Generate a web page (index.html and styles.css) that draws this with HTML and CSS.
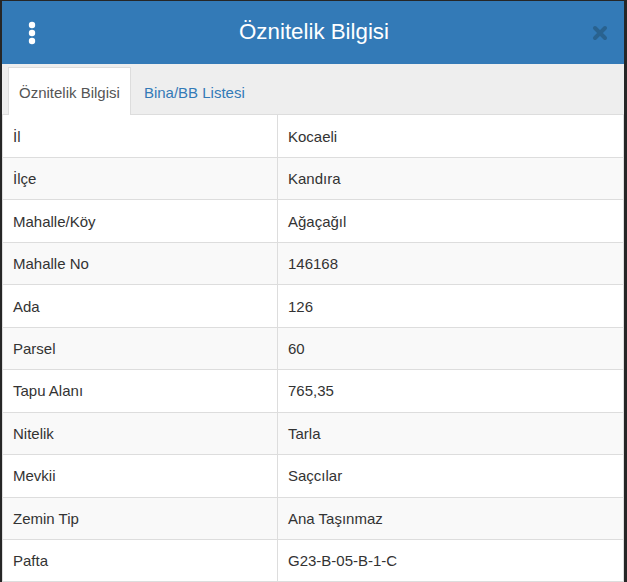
FILE: index.html
```html
<!DOCTYPE html>
<html lang="tr">
<head>
<meta charset="utf-8">
<title>Öznitelik Bilgisi</title>
<link rel="stylesheet" href="styles.css">
</head>
<body>
<div class="modal">
  <div class="header">
    <span class="menu">
      <svg width="8" height="24" viewBox="0 0 8 24"><circle cx="4" cy="4" r="3.2" fill="#fff"/><circle cx="4" cy="12" r="3.2" fill="#fff"/><circle cx="4" cy="20" r="3.2" fill="#fff"/></svg>
    </span>
    <h1 class="title">Öznitelik Bilgisi</h1>
    <span class="close">
      <svg width="16" height="16" viewBox="0 0 16 16"><path d="M3 3 L13 13 M13 3 L3 13" stroke="#29628f" stroke-width="4" stroke-linecap="round"/></svg>
    </span>
  </div>
  <div class="tabs">
    <span class="tab active">Öznitelik Bilgisi</span>
    <span class="tab">Bina/BB Listesi</span>
  </div>
  <div class="table">
    <div class="row"><div class="cell">İl</div><div class="cell">Kocaeli</div></div>
    <div class="row"><div class="cell">İlçe</div><div class="cell">Kandıra</div></div>
    <div class="row"><div class="cell">Mahalle/Köy</div><div class="cell">Ağaçağıl</div></div>
    <div class="row"><div class="cell">Mahalle No</div><div class="cell">146168</div></div>
    <div class="row"><div class="cell">Ada</div><div class="cell">126</div></div>
    <div class="row"><div class="cell">Parsel</div><div class="cell">60</div></div>
    <div class="row"><div class="cell">Tapu Alanı</div><div class="cell">765,35</div></div>
    <div class="row"><div class="cell">Nitelik</div><div class="cell">Tarla</div></div>
    <div class="row"><div class="cell">Mevkii</div><div class="cell">Saçcılar</div></div>
    <div class="row"><div class="cell">Zemin Tip</div><div class="cell">Ana Taşınmaz</div></div>
    <div class="row"><div class="cell">Pafta</div><div class="cell">G23-B-05-B-1-C</div></div>
  </div>
</div>
</body>
</html>
```
FILE: styles.css
```css
html, body {
  margin: 0;
  padding: 0;
  height: 100%;
  overflow: hidden;
}
body {
  background: #262626;
  font-family: "Liberation Sans", Arial, sans-serif;
  font-size: 15px;
  color: #333;
}
.modal {
  margin: 1px 3px 0 2px;
  width: 622px;
  background: #fff;
}
.header {
  height: 63px;
  background: #337ab7;
  display: flex;
  align-items: center;
  justify-content: space-between;
  padding: 0 16px 0 26px;
}
.menu {
  display: flex;
  width: 8px;
  margin-top: 1px;
}
.title {
  margin: 0;
  font-size: 22.3px;
  font-weight: normal;
  color: #fff;
  line-height: 1;
  margin-left: 0;
}
.close {
  display: flex;
  margin-top: 1px;
}
.tabs {
  background: #eee;
  display: flex;
  align-items: flex-end;
  gap: 2px;
  padding: 3px 6px 0;
  height: 47px;
  border-bottom: 1px solid #ddd;
}
.tab {
  padding: 14px 10px 12px;
  line-height: 21px;
  color: #337ab7;
  border: 1px solid transparent;
  border-bottom: 0;
  margin-bottom: -1px;
}
.tab.active {
  background: #fff;
  color: #555;
  border-color: #ddd;
}
.table {
  border-left: 1px solid #ddd;
  border-right: 1px solid #ddd;
}
.row {
  display: grid;
  grid-template-columns: 274px 1fr;
  height: 42.45px;
  box-sizing: border-box;
  border-bottom: 1px solid #ddd;
}
.row:first-child {
  height: 43px;
}
.row:nth-child(even) {
  background: #f9f9f9;
}
.cell {
  display: flex;
  align-items: center;
  padding: 0 10px;
}
.cell + .cell {
  border-left: 1px solid #ddd;
}
```
